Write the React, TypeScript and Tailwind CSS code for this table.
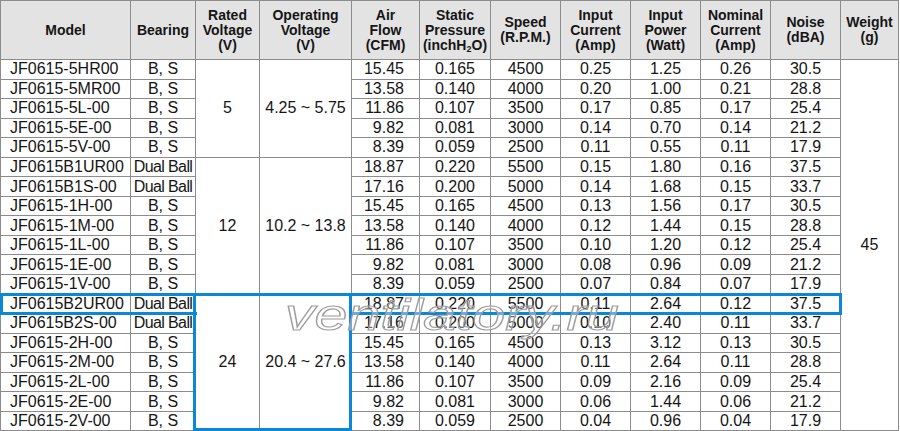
import React from 'react';

type Row = {
  model: string;
  bearing: string;
  air: string;
  pressure: string;
  speed: string;
  current: string;
  power: string;
  nominal: string;
  noise: string;
};

type Group = { rated: string; range: string; rows: Row[] };

const r = (
  model: string,
  bearing: string,
  air: string,
  pressure: string,
  speed: string,
  current: string,
  power: string,
  nominal: string,
  noise: string
): Row => ({ model, bearing, air, pressure, speed, current, power, nominal, noise });

const groups: Group[] = [
  {
    rated: '5',
    range: '4.25 ~ 5.75',
    rows: [
      r('JF0615-5HR00', 'B, S', '15.45', '0.165', '4500', '0.25', '1.25', '0.26', '30.5'),
      r('JF0615-5MR00', 'B, S', '13.58', '0.140', '4000', '0.20', '1.00', '0.21', '28.8'),
      r('JF0615-5L-00', 'B, S', '11.86', '0.107', '3500', '0.17', '0.85', '0.17', '25.4'),
      r('JF0615-5E-00', 'B, S', '9.82', '0.081', '3000', '0.14', '0.70', '0.14', '21.2'),
      r('JF0615-5V-00', 'B, S', '8.39', '0.059', '2500', '0.11', '0.55', '0.11', '17.9'),
    ],
  },
  {
    rated: '12',
    range: '10.2 ~ 13.8',
    rows: [
      r('JF0615B1UR00', 'Dual Ball', '18.87', '0.220', '5500', '0.15', '1.80', '0.16', '37.5'),
      r('JF0615B1S-00', 'Dual Ball', '17.16', '0.200', '5000', '0.14', '1.68', '0.15', '33.7'),
      r('JF0615-1H-00', 'B, S', '15.45', '0.165', '4500', '0.13', '1.56', '0.17', '30.5'),
      r('JF0615-1M-00', 'B, S', '13.58', '0.140', '4000', '0.12', '1.44', '0.15', '28.8'),
      r('JF0615-1L-00', 'B, S', '11.86', '0.107', '3500', '0.10', '1.20', '0.12', '25.4'),
      r('JF0615-1E-00', 'B, S', '9.82', '0.081', '3000', '0.08', '0.96', '0.09', '21.2'),
      r('JF0615-1V-00', 'B, S', '8.39', '0.059', '2500', '0.07', '0.84', '0.07', '17.9'),
    ],
  },
  {
    rated: '24',
    range: '20.4 ~ 27.6',
    rows: [
      r('JF0615B2UR00', 'Dual Ball', '18.87', '0.220', '5500', '0.11', '2.64', '0.12', '37.5'),
      r('JF0615B2S-00', 'Dual Ball', '17.16', '0.200', '5000', '0.10', '2.40', '0.11', '33.7'),
      r('JF0615-2H-00', 'B, S', '15.45', '0.165', '4500', '0.13', '3.12', '0.13', '30.5'),
      r('JF0615-2M-00', 'B, S', '13.58', '0.140', '4000', '0.11', '2.64', '0.11', '28.8'),
      r('JF0615-2L-00', 'B, S', '11.86', '0.107', '3500', '0.09', '2.16', '0.09', '25.4'),
      r('JF0615-2E-00', 'B, S', '9.82', '0.081', '3000', '0.06', '1.44', '0.06', '21.2'),
      r('JF0615-2V-00', 'B, S', '8.39', '0.059', '2500', '0.04', '0.96', '0.04', '17.9'),
    ],
  },
];

const cell = 'border-r border-b border-[#8c8c8c] flex items-center';
const head = `${cell} justify-center text-center bg-[#e3e3e3] font-bold text-[14px] leading-[15px]`;
const body = `${cell} justify-center text-[16px] leading-none`;

const Header: React.FC = () => (
  <>
    <div className={head}>Model</div>
    <div className={head}>Bearing</div>
    <div className={head}>Rated<br />Voltage<br />(V)</div>
    <div className={head}>Operating<br />Voltage<br />(V)</div>
    <div className={head}>Air<br />Flow<br />(CFM)</div>
    <div className={head}>
      <span>
        Static<br />Pressure<br />(inchH<sub className="text-[9px] align-baseline relative top-[2px]">2</sub>O)
      </span>
    </div>
    <div className={head}>Speed<br />(R.P.M.)</div>
    <div className={head}>Input<br />Current<br />(Amp)</div>
    <div className={head}>Input<br />Power<br />(Watt)</div>
    <div className={head}>Nominal<br />Current<br />(Amp)</div>
    <div className={head}>Noise<br />(dBA)</div>
    <div className={head}>Weight<br />(g)</div>
  </>
);

// outlined site watermark laid over the table
const Watermark: React.FC = () => (
  <svg className="absolute left-[280px] top-[284px] pointer-events-none" width="350" height="56" viewBox="0 0 350 56">
    <text
      x="4"
      y="45"
      fontFamily="'Liberation Sans', Arial, sans-serif"
      fontSize="44"
      fontStyle="italic"
      textLength="334"
      lengthAdjust="spacingAndGlyphs"
      fill="rgba(255,255,255,0.35)"
      stroke="#9c9c9c"
      strokeWidth="1.1"
    >
      ventilatory.ru
    </text>
  </svg>
);

export default function App() {
  let first = true;
  return (
    <div className="w-[900px] h-[431px] bg-white overflow-hidden text-[#151515] font-['Liberation_Sans',Arial,sans-serif]">
      <div className="relative w-[899px] border-l border-t border-[#8c8c8c] grid grid-cols-[130px_65px_64px_92px_68px_71px_70px_70px_70px_70px_70px_58px] grid-rows-[59px_repeat(19,19.55px)]">
        <Header />
        {groups.map((g) =>
          g.rows.map((row, i) => {
            const showWeight = first;
            first = false;
            return (
              <React.Fragment key={row.model}>
                <div className={`${cell} justify-start pl-[9px] text-[16px] leading-none`}>{row.model}</div>
                <div className={`${body} ${row.bearing === 'Dual Ball' ? 'tracking-[-0.6px]' : ''}`}>{row.bearing}</div>
                {i === 0 && (
                  <>
                    <div className={`${body} ${g.rows.length === 5 ? 'row-span-5' : 'row-span-7'}`}>{g.rated}</div>
                    <div className={`${body} ${g.rows.length === 5 ? 'row-span-5' : 'row-span-7'}`}>{g.range}</div>
                  </>
                )}
                <div className={`${cell} justify-end pr-[15px] text-[16px] leading-none`}>{row.air}</div>
                <div className={body}>{row.pressure}</div>
                <div className={body}>{row.speed}</div>
                <div className={body}>{row.current}</div>
                <div className={body}>{row.power}</div>
                <div className={body}>{row.nominal}</div>
                <div className={body}>{row.noise}</div>
                {showWeight && <div className={`${body} row-span-19`}>45</div>}
              </React.Fragment>
            );
          })
        )}

        {/* blue highlight around the B2UR00 row and the 24 V block */}
        <div className="absolute left-[-1px] top-[291.5px] w-[196.5px] h-[22.7px] border-[3px] border-r-0 border-[#0a88d6] pointer-events-none" />
        <div className="absolute left-[347.5px] top-[291.5px] w-[493px] h-[22.7px] border-[3px] border-l-0 border-[#0a88d6] pointer-events-none" />
        <div className="absolute left-[191.5px] top-[291.5px] w-[159px] h-[138.5px] border-[3px] border-[#0a88d6] pointer-events-none" />

        <Watermark />
      </div>
    </div>
  );
}
